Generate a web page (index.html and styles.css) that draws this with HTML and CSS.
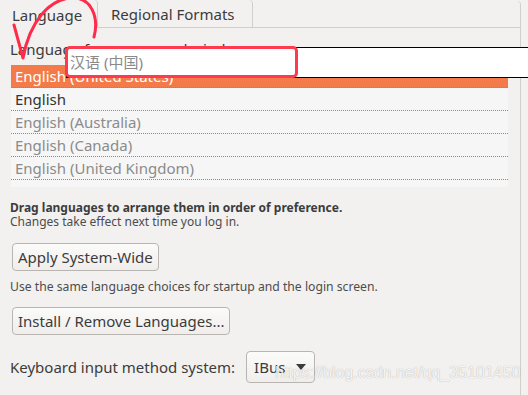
FILE: index.html
```html
<!DOCTYPE html>
<html>
<head>
  <meta charset="utf-8">
  <link rel="stylesheet" href="styles.css">
</head>
<body>
  <div class="notebook">
    <!-- Tabs -->
    <div class="tabs">
      <div class="tab active">Language</div>
      <div class="tab">Regional Formats</div>
      <div class="tab-fill"></div>
    </div>

    <div class="page">
      <div class="label">Language for menus and windows:</div>

      <ul class="lang-list">
        <li class="selected">English (United States)</li>
        <li class="current">English</li>
        <li>English (Australia)</li>
        <li>English (Canada)</li>
        <li>English (United Kingdom)</li>
      </ul>

      <p class="hint"><b>Drag languages to arrange them in order of preference.</b><br>Changes take effect next time you log in.</p>

      <button class="btn">Apply System-Wide</button>
      <p class="note">Use the same language choices for startup and the login screen.</p>

      <button class="btn">Install / Remove Languages...</button>

      <div class="im-row">
        <span>Keyboard input method system:</span>
        <div class="combo">IBus <span class="arrow"></span></div>
      </div>
    </div>
  </div>

  <!-- Drag popup and annotations -->
  <div class="drag-entry">汉语 (中国)</div>
  <div class="mark-box"></div>
  <svg class="mark-arrow" width="120" height="70" viewBox="0 0 120 70">
    <path d="M94 37 C99 18 92 -4 70 -2 C50 0 30 20 23 58 M14 25 L23 58" fill="none" stroke="#fd2c4b" stroke-width="3" stroke-linecap="round" stroke-linejoin="round"/>
  </svg>
  <div class="watermark">https://blog.csdn.net/qq_35101450</div>
</body>
</html>
```

FILE: styles.css
```css
body {
  margin: 0;
  background: #f2f1f0;
  font-family: "Noto Sans", "Noto Sans CJK SC", sans-serif;
  font-size: 15px;
  color: #3c3c3c;
  width: 528px;
  height: 395px;
  overflow: hidden;
  position: relative;
}

.notebook {
  width: 521px;
}

.tabs {
  display: flex;
  height: 28px;
}

.tab {
  box-sizing: border-box;
  height: 28px;
  line-height: 28px;
  padding: 0 13px;
  border-right: 1px solid #d2cfcb;
  border-bottom: 1px solid #d2cfcb;
  border-top-right-radius: 4px;
}

.tab.active {
  width: 98px;
  padding-left: 12px;
  border-bottom-color: transparent;
  line-height: 30px;
}

.tab:nth-child(2) {
  width: 155px;
  padding-left: 13px;
}

.tab-fill {
  flex: 1;
  border-bottom: 1px solid #d2cfcb;
  border-right: 1px solid #d2cfcb;
  border-top-right-radius: 4px;
  margin-top: 1px;
}

.page {
  border-right: 1px solid #d2cfcb;
  height: 367px;
  padding: 0 0 0 10px;
}

.label {
  padding-top: 12px;
  line-height: 18px;
}

.lang-list {
  list-style: none;
  margin: 7px 0 0 1px;
  padding: 0 0 7px;
  width: 497px;
  background: #f6f6f6;
}

.lang-list li {
  height: 22px;
  line-height: 22px;
  padding-left: 4px;
  border-bottom: 1px dotted #8a8a8a;
  color: #8b8b8b;
}

.lang-list li.selected {
  background: #f37b49;
  color: #fff;
}

.lang-list li.current {
  color: #333;
}

.hint, .note {
  margin: 14px 0 0;
  font-size: 12px;
  line-height: 14px;
  color: #4c4c4c;
}

.hint b {
  color: #3c3c3c;
}

.note {
  margin-top: 9px;
  font-size: 12.2px;
}

.btn {
  display: block;
  margin: 14px 0 0 2px;
  height: 28px;
  padding: 0 5px;
  font: inherit;
  color: #3c3c3c;
  background: linear-gradient(#fbfbfa, #efeeec);
  border: 1px solid #b9b6b2;
  border-radius: 4px;
}

.note + .btn {
  margin-top: 13px;
}

.im-row {
  display: flex;
  align-items: center;
  gap: 11px;
  margin-top: 16px;
}

.combo {
  display: flex;
  align-items: center;
  box-sizing: border-box;
  height: 32px;
  width: 69px;
  padding: 0 8px 0 7px;
  justify-content: space-between;
  background: linear-gradient(#fbfbfa, #efeeec);
  border: 1px solid #b9b6b2;
  border-radius: 4px;
}

.arrow {
  width: 0;
  height: 0;
  border-left: 5px solid transparent;
  border-right: 5px solid transparent;
  border-top: 6px solid #3c3c3c;
}

.drag-entry {
  position: absolute;
  left: 66px;
  top: 47px;
  width: 480px;
  height: 31px;
  box-sizing: border-box;
  background: #fff;
  border: 1px solid #000;
  padding-left: 3px;
  line-height: 28px;
  font-size: 15px;
  color: #8a8a8a;
}

.mark-box {
  position: absolute;
  left: 65px;
  top: 46px;
  width: 227px;
  height: 26px;
  border: 3px solid #fd3a4f;
  border-radius: 5px;
}

.mark-arrow {
  position: absolute;
  left: 0;
  top: 0;
}

.watermark {
  position: absolute;
  left: 275px;
  top: 364px;
  font-family: "Liberation Sans", sans-serif;
  font-size: 16px;
  color: rgba(255, 255, 255, 0.9);
  text-shadow: 0 0 1px rgba(0, 0, 0, 0.35);
}
```
